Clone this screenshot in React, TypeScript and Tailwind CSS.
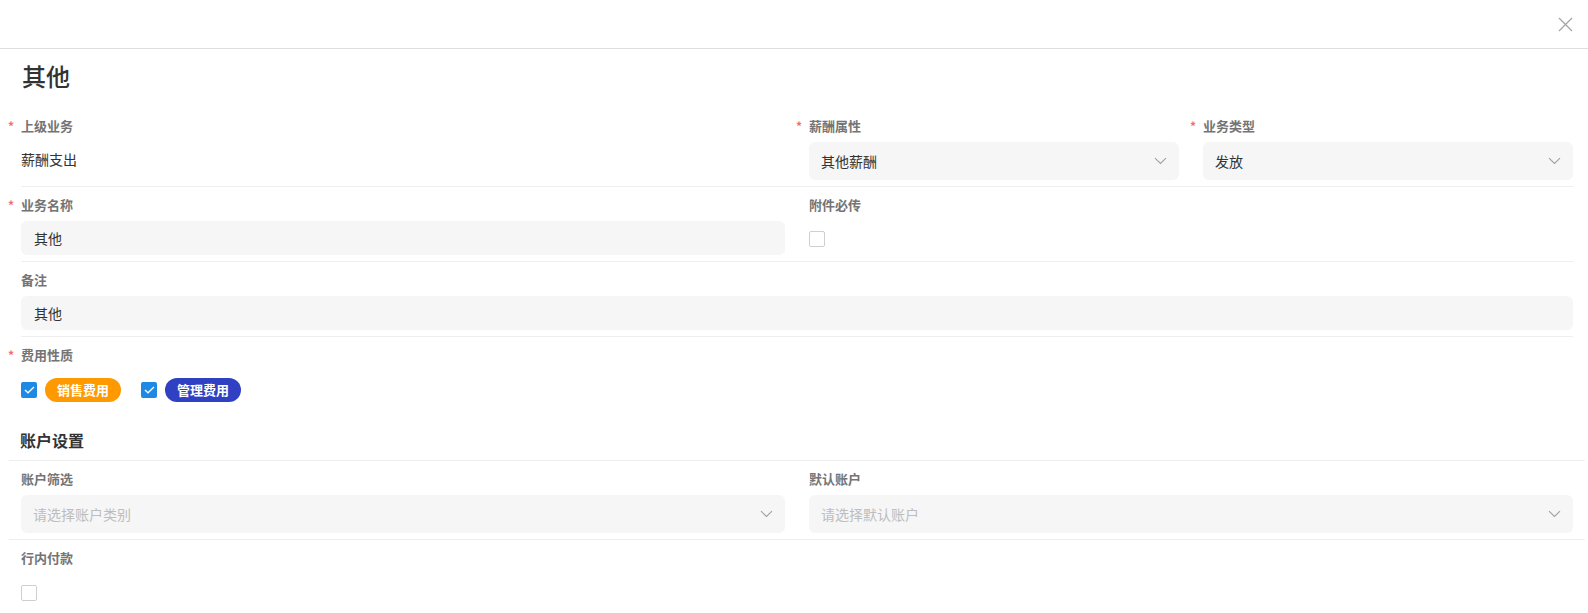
import React from "react";

const font = { fontFamily: '"Noto Sans CJK SC", "Noto Sans", sans-serif' };

function Label({ text, required }: { text: string; required?: boolean }) {
  return (
    <div className="relative h-[20px] leading-[20px] text-[13px] font-bold text-[#747474] mb-[6px]">
      {required && (
        <span className="absolute left-[-13px] top-[0px] text-[12px] text-[#f56c6c]">*</span>
      )}
      {text}
    </div>
  );
}

function Chevron() {
  return (
    <svg width="13" height="8" viewBox="0 0 13 8" fill="none">
      <path d="M1 1.2 L6.5 6.5 L12 1.2" stroke="#a0a0a0" strokeWidth="1.1" />
    </svg>
  );
}

function Select({ value, placeholder }: { value?: string; placeholder?: string }) {
  return (
    <div className="h-[38px] rounded-[6px] bg-[#f6f6f6] flex items-center justify-between pl-[12px] pr-[12px] text-[14px]">
      {value ? (
        <span className="text-[#333]">{value}</span>
      ) : (
        <span className="text-[#bdbdbd]">{placeholder}</span>
      )}
      <Chevron />
    </div>
  );
}

function Input({ value }: { value: string }) {
  return (
    <div className="h-[34px] rounded-[6px] bg-[#f6f6f6] flex items-center pl-[13px] text-[14px] text-[#333]">
      {value}
    </div>
  );
}

function Checkbox({ checked }: { checked?: boolean }) {
  if (checked) {
    return (
      <div className="w-[16px] h-[16px] rounded-[2px] bg-[#1e88e5] flex items-center justify-center">
        <svg width="11" height="8" viewBox="0 0 11 8" fill="none">
          <path d="M1 4 L4 6.8 L10 1" stroke="#fff" strokeWidth="1.3" />
        </svg>
      </div>
    );
  }
  return <div className="w-[16px] h-[16px] rounded-[2px] border border-[#cfcfcf] bg-white" />;
}

export default function App() {
  return (
    <div className="w-[1588px] h-[613px] bg-white overflow-hidden" style={font}>
      <div className="h-[49px] border-b border-[#dedede] flex items-center justify-end pr-[15px]">
        <svg width="15" height="15" viewBox="0 0 15 15" fill="none">
          <path d="M1 1 L14 14 M14 1 L1 14" stroke="#a3a3a3" strokeWidth="1.2" />
        </svg>
      </div>

      <div className="pl-[21px] pr-[15px]">
        <div className="h-[32px] leading-[32px] mt-[11px] mb-[16px] text-[24px] font-medium text-[#333] pl-[1px]">
          其他
        </div>

        <div className="grid grid-cols-4 gap-x-[24px] pt-[8px] pb-[6px] border-b border-[#eeeeee]">
          <div className="col-span-2">
            <Label text="上级业务" required />
            <div className="h-[38px] flex items-center text-[14px] text-[#333] pb-[3px]">薪酬支出</div>
          </div>
          <div>
            <Label text="薪酬属性" required />
            <Select value="其他薪酬" />
          </div>
          <div>
            <Label text="业务类型" required />
            <Select value="发放" />
          </div>
        </div>

        <div className="grid grid-cols-4 gap-x-[24px] pt-[8px] pb-[6px] border-b border-[#eeeeee]">
          <div className="col-span-2">
            <Label text="业务名称" required />
            <Input value="其他" />
          </div>
          <div className="col-span-2">
            <Label text="附件必传" />
            <div className="h-[34px] flex items-center pt-[2px]">
              <Checkbox />
            </div>
          </div>
        </div>

        <div className="pt-[8px] pb-[6px] border-b border-[#eeeeee]">
          <Label text="备注" />
          <Input value="其他" />
        </div>

        <div className="pt-[8px]">
          <Label text="费用性质" required />
          <div className="h-[38px] flex items-center">
            <Checkbox checked />
            <span className="ml-[8px] h-[24px] px-[12px] rounded-full bg-[#ff9900] text-white text-[13px] font-semibold flex items-center">
              销售费用
            </span>
            <div className="ml-[20px]">
              <Checkbox checked />
            </div>
            <span className="ml-[8px] h-[24px] px-[12px] rounded-full bg-[#2f41c2] text-white text-[13px] font-semibold flex items-center">
              管理费用
            </span>
          </div>
        </div>
      </div>

      <div className="ml-[9px] mr-[3px] mt-[19px]">
        <div className="h-[24px] leading-[24px] text-[16px] font-bold text-[#333] pl-[11px] mb-[8px]">账户设置</div>
        <div className="border-t border-[#eeeeee] grid grid-cols-2 gap-x-[24px] pl-[12px] pr-[12px] pt-[8px] pb-[6px] border-b">
          <div>
            <Label text="账户筛选" />
            <Select placeholder="请选择账户类别" />
          </div>
          <div>
            <Label text="默认账户" />
            <Select placeholder="请选择默认账户" />
          </div>
        </div>
        <div className="pl-[12px] pt-[8px]">
          <Label text="行内付款" />
          <div className="h-[38px] flex items-center">
            <Checkbox />
          </div>
        </div>
      </div>
    </div>
  );
}
